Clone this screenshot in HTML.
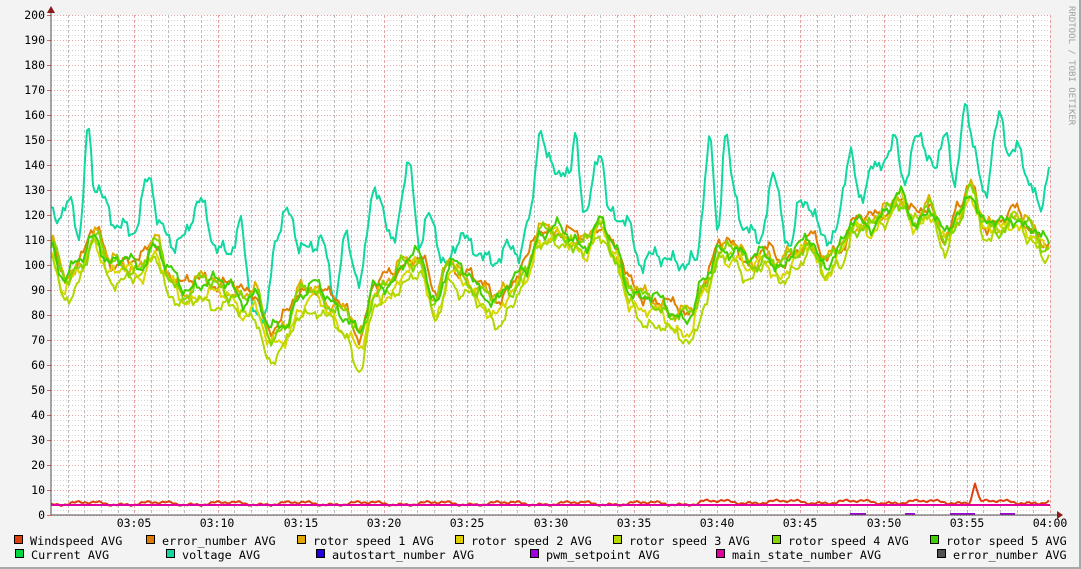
<!DOCTYPE html>
<html><head><meta charset="utf-8"><style>
html,body{margin:0;padding:0;}
body{width:1081px;height:569px;overflow:hidden;background:#f3f3f3;}
#wrap{position:relative;width:1079px;height:567px;background:#f3f3f3;border-right:2px solid #a8a8a8;border-bottom:2px solid #a8a8a8;}
svg{position:absolute;left:0;top:0;}
text{font-family:"DejaVu Sans Mono","Liberation Mono",monospace;}
</style></head><body><div id="wrap">
<svg id="g" width="1081" height="569" xmlns="http://www.w3.org/2000/svg">
<rect x="51" y="15" width="999" height="500" fill="#ffffff"/>
<g id="grid"></g>
<g id="lines" fill="none" stroke-width="2" stroke-linejoin="round"></g>
<line x1="51" y1="515" x2="1058" y2="515" stroke="#505050" stroke-width="1"/>
<line x1="51" y1="8" x2="51" y2="515" stroke="#505050" stroke-width="1"/>
<polygon points="1057,511 1063,515 1057,519" fill="#8b1a1a"/>
<polygon points="47,13 51,6 55,13" fill="#8b1a1a"/>
<g id="ylab" font-size="11.5" fill="#000" text-anchor="end"></g>
<g id="xlab" font-size="11.5" fill="#000" text-anchor="middle">
<text x="134" y="527">03:05</text><text x="217" y="527">03:10</text><text x="301" y="527">03:15</text>
<text x="384" y="527">03:20</text><text x="467" y="527">03:25</text><text x="551" y="527">03:30</text>
<text x="634" y="527">03:35</text><text x="717" y="527">03:40</text><text x="800" y="527">03:45</text>
<text x="884" y="527">03:50</text><text x="967" y="527">03:55</text><text x="1050" y="527">04:00</text>
</g>
<text x="0" y="0" font-size="9" fill="#a0a0a0" transform="translate(1069,6) rotate(90)">RRDTOOL / TOBI OETIKER</text>
<g id="leg" font-size="11.8" fill="#000"></g>
</svg>
</div>
<script>
var NS="http://www.w3.org/2000/svg";
function el(p,t,a,txt){var e=document.createElementNS(NS,t);for(var k in a)e.setAttribute(k,a[k]);if(txt!==undefined)e.textContent=txt;p.appendChild(e);return e;}
var grid=document.getElementById('grid');
for(var v=0;v<=200;v+=2){var y=515-v*2.5;var maj=v%10==0;
 el(grid,'line',{x1:51,x2:1050,y1:y+0.5,y2:y+0.5,stroke:maj?'#e8a0a0':'#d4d4d4','stroke-width':1,'stroke-dasharray':'1,2'});
 if(maj)el(grid,'line',{x1:47,x2:51,y1:y+0.5,y2:y+0.5,stroke:'#e06060','stroke-width':1});}
for(var m=1;m<=60;m++){var x=Math.round(51+m*999/60)+0.5;var maj=m%5==0;
 el(grid,'line',{x1:x,x2:x,y1:15,y2:515,stroke:maj?'#e8a0a0':'#bcbcbc','stroke-width':1,'stroke-dasharray':'3,2'});}
var yl=document.getElementById('ylab');
for(var v=0;v<=200;v+=10){el(yl,'text',{x:45,y:515-v*2.5+4},String(v));}
function interp(pts,x){for(var i=0;i<pts.length-1;i++){if(x>=pts[i][0]&&x<=pts[i+1][0]){var t=(x-pts[i][0])/(pts[i+1][0]-pts[i][0]);t=t*t*(3-2*t);return pts[i][1]+(pts[i+1][1]-pts[i][1])*t;}}return pts[pts.length-1][1];}
function noise(x,s){return Math.sin(x*0.31+s)*1.6+Math.sin(x*0.13+s*2.1)*2.2+Math.sin(x*0.71+s*0.7)*0.9+Math.sin(x*1.37+s*3.3)*0.8;}
var volt=[[51,125],[56,118],[62,120],[70,132],[80,110],[88,153],[95,128],[105,125],[120,118],[135,112],[150,134],[160,118],[175,110],[185,108],[200,126],[215,112],[230,102],[240,115],[250,88],[265,80],[275,110],[290,118],[300,108],[320,112],[335,84],[345,110],[360,98],[375,130],[390,108],[410,142],[420,108],[430,116],[445,100],[460,115],[475,103],[490,100],[505,110],[520,104],[530,115],[540,155],[550,143],[560,140],[570,132],[575,150],[585,118],[600,150],[610,120],[625,115],[640,103],[655,107],[670,98],[685,100],[695,105],[710,148],[718,110],[725,150],[735,128],[745,118],[760,110],[775,132],[790,108],[800,130],[815,115],[830,108],[850,145],[860,125],[875,137],[885,146],[895,152],[905,133],[920,150],[935,140],[945,158],[955,128],[965,163],[975,143],[985,133],[1000,160],[1010,140],[1020,145],[1030,135],[1040,125],[1050,140]];
var base=[[51,108],[65,93],[80,100],[95,112],[110,100],[125,100],[140,99],[155,108],[170,95],[185,89],[200,93],[215,92],[230,90],[245,86],[255,88],[270,72],[285,76],[300,88],[315,90],[330,85],[345,80],[360,71],[375,90],[390,93],[405,100],[420,102],[435,85],[450,100],[465,95],[480,90],[495,85],[510,90],[525,98],[540,112],[555,113],[570,110],[585,108],[600,116],[615,105],[630,90],[645,86],[660,84],[675,80],[690,79],[705,92],[720,106],[735,106],[750,100],[765,104],[780,99],[795,104],[810,109],[825,100],[840,106],[855,116],[870,116],[885,120],[900,126],[915,117],[930,122],[945,110],[960,120],[970,130],[985,115],[1000,115],[1015,119],[1030,114],[1046,107]];
var L=document.getElementById('lines');
function line(fn,col,w){var p=[];for(var x=51;x<=1049;x+=2){var v=fn(x);p.push(x+','+(515-v*2.5).toFixed(1));}el(L,'polyline',{points:p.join(' '),stroke:col,'stroke-width':w||2});}
line(function(x){return interp(volt,x)+noise(x,1)*1.5;},'#10d8a0');
var gs=[['#e08000',2,1,2],['#e0b000',1,3,0],['#d8d800',-3,5,-1],['#b0d800',-5,7,-3],['#80d800',0,9,1],['#40d000',1,11,0]];
gs.forEach(function(g,i){line(function(x){var b=interp(base,x);var d=b-100;var amp=(i==3?1.2:(i==2?1.1:1));return 100+d*amp+g[1]+noise(x,g[2])*1.0;},g[0]);});
line(function(x){return 4.6+Math.sin(x*0.09)*0.6+Math.sin(x*0.27)*0.4+Math.sin(x*0.9)*0.3+(x>700?0.6:0)+(x>970&&x<980?8*(1-Math.abs(x-975)/5):0);},'#e04010');
el(L,'line',{x1:51,x2:1050,y1:505,y2:505,stroke:'#e000a0','stroke-width':2});
[[850,866],[905,915],[950,975],[1000,1015]].forEach(function(s){el(L,'line',{x1:s[0],x2:s[1],y1:514,y2:514,stroke:'#a000e0','stroke-width':2});});
var leg=document.getElementById('leg');
var items=[[30,541,'#e04010','Windspeed AVG'],[162,541,'#e07b00','error_number AVG'],[313,541,'#e0a800','rotor speed 1 AVG'],[471,541,'#e0d000','rotor speed 2 AVG'],[629,541,'#b8d800','rotor speed 3 AVG'],[788,541,'#80d800','rotor speed 4 AVG'],[946,541,'#40d000','rotor speed 5 AVG'],
[31,555,'#00d840','Current AVG'],[182,555,'#10d8a0','voltage AVG'],[332,555,'#2000e0','autostart_number AVG'],[546,555,'#a000e0','pwm_setpoint AVG'],[732,555,'#e000a0','main_state_number AVG'],[953,555,'#505050','error_number AVG']];
items.forEach(function(it){el(leg,'rect',{x:it[0]-15.5,y:it[1]-5.5,width:8,height:8,fill:it[2],stroke:'#000','stroke-width':1});el(leg,'text',{x:it[0],y:it[1]+4},it[3]);});
</script>
</body></html>
